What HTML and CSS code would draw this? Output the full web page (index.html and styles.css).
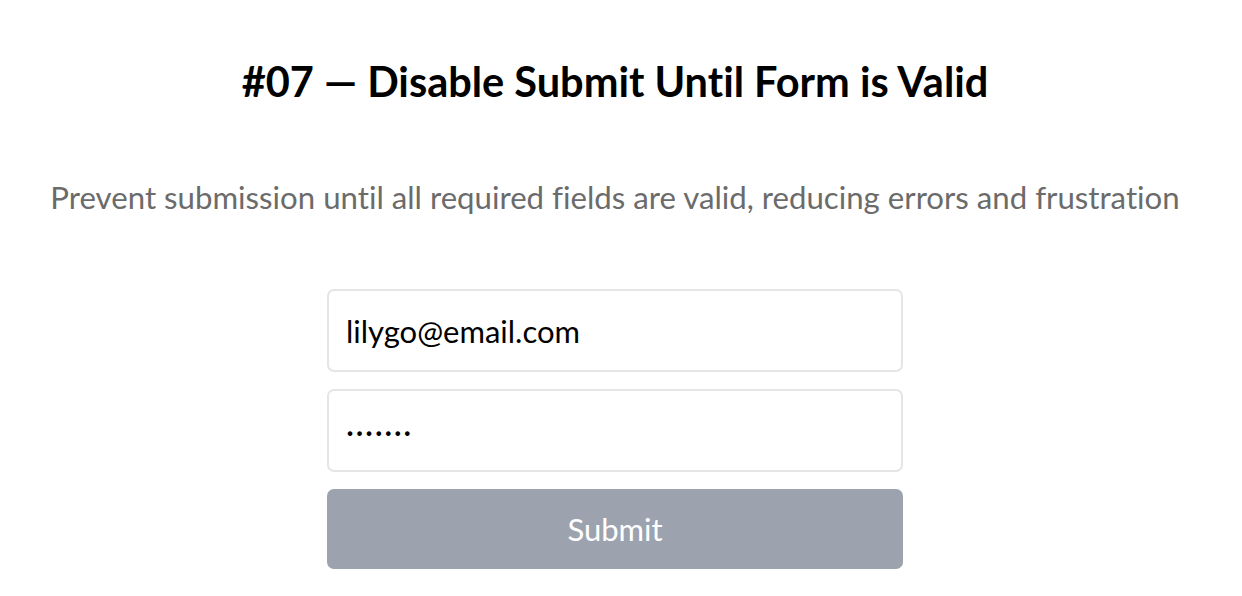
FILE: index.html
```html
<!DOCTYPE html>
<html lang="en">
<head>
<meta charset="utf-8">
<title>#07 — Disable Submit Until Form is Valid</title>
<link rel="stylesheet" href="styles.css">
</head>
<body>
<main class="page">
  <h1 class="title">#07 — Disable Submit Until Form is Valid</h1>
  <p class="subtitle">Prevent submission until all required fields are valid, reducing errors and frustration</p>
  <form class="form">
    <input class="field" type="email" value="lilygo@email.com" aria-label="Email">
    <input class="field field-secret" type="text" value="·······" aria-label="Password">
    <button class="submit" type="button" disabled>Submit</button>
  </form>
</main>
</body>
</html>
```

FILE: styles.css
```css
* { box-sizing: border-box; }
html, body { margin: 0; padding: 0; background: #fff; }
body {
  font-family: "Lato", "Liberation Sans", sans-serif;
  font-variant-ligatures: none;
}
.page {
  display: flex;
  flex-direction: column;
  align-items: center;
  padding: 0 12px 0 0;
}
.title {
  margin: 56px 0 0;
  font-size: 41.5px;
  line-height: 50px;
  font-weight: 700;
  color: #000;
}
.subtitle {
  margin: 71px 0 0;
  font-size: 31.2px;
  line-height: 40px;
  color: #6b6b6b;
}
.form {
  margin-top: 72px;
  width: 576px;
  display: flex;
  flex-direction: column;
  gap: 17px;
}
.field {
  height: 83px;
  width: 100%;
  border: 2px solid #e5e5e5;
  border-radius: 7px;
  padding: 0 17px;
  font-family: inherit;
  font-variant-ligatures: none;
  font-size: 31px;
  color: #000;
  background: #fff;
  outline: none;
}
.field-secret {
  font-weight: 400;
  letter-spacing: 1.5px;
}
.submit {
  height: 80px;
  width: 100%;
  border: none;
  border-radius: 7px;
  background: #9ca3af;
  color: #fff;
  font-family: inherit;
  font-size: 31px;
}
```
